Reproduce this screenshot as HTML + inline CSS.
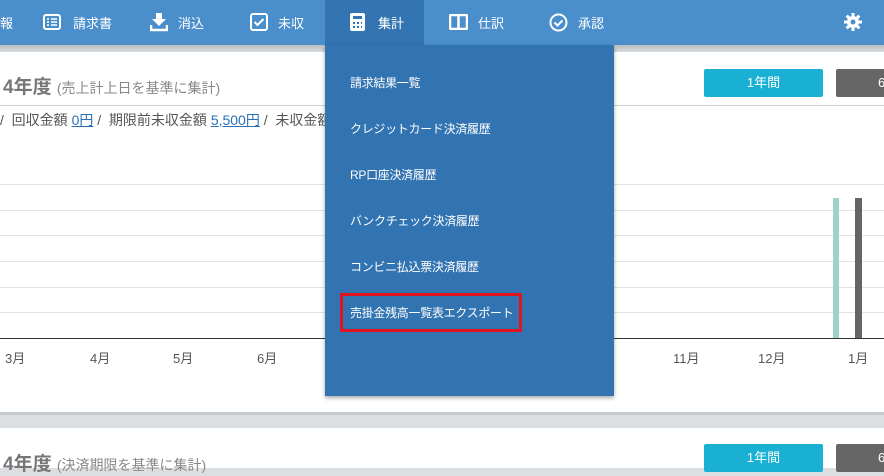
<!DOCTYPE html>
<html><head><meta charset="utf-8"><style>
*{margin:0;padding:0;box-sizing:border-box}
body{width:884px;height:465px;overflow:hidden;position:relative;background:#dcdfe1;font-family:"Liberation Sans","Noto Sans CJK JP",sans-serif}
.a{position:absolute}
.nav{left:0;top:0;width:884px;height:45px;background:#4a8fcc}
.nt{color:#fff;font-size:13px;top:13px}
.card{background:#fff;left:0;width:884px}
.gl{left:0;width:884px;height:1px;background:#e2e2e2}
.m{color:#555;font-size:13px;top:348px}
.mi{color:#fff;font-size:12px;left:350px;letter-spacing:-0.3px}
</style></head><body>
<div class="a nav"></div>
<div class="a" style="left:0;top:45px;width:884px;height:8px;background:linear-gradient(#b9bdc0,#dcdfe1)"></div>
<div class="a card" style="top:52px;height:360px"></div>
<div class="a card" style="top:428px;height:40px"></div>
<div class="a" style="left:0;top:412px;width:884px;height:3px;background:#c6cacd"></div>

<div class="a nt" style="left:0">報</div>
<svg class="a" style="left:43px;top:14px" width="18" height="16"><rect x="1" y="1" width="16" height="14" rx="2" fill="none" stroke="#fff" stroke-width="2"/><path d="M4 5h2M8 5h6M4 8h2M8 8h6M4 11h2M8 11h6" stroke="#fff" stroke-width="1.5"/></svg>
<div class="a nt" style="left:73px">請求書</div>
<svg class="a" style="left:150px;top:12px" width="18" height="20"><path d="M6 1h6v6h4l-7 7-7-7h4z" fill="#fff"/><path d="M1 13v5h16v-5" fill="none" stroke="#fff" stroke-width="2.5"/></svg>
<div class="a nt" style="left:178px">消込</div>
<svg class="a" style="left:250px;top:13px" width="18" height="18"><rect x="1" y="1" width="16" height="16" rx="2" fill="none" stroke="#fff" stroke-width="2"/><path d="M4.5 9l3 3 6-6" fill="none" stroke="#fff" stroke-width="2"/></svg>
<div class="a nt" style="left:278px">未収</div>
<div class="a" style="left:325px;top:0;width:99px;height:45px;background:#3374b2"></div>
<svg class="a" style="left:350px;top:13px" width="15" height="18"><rect x="0" y="0" width="15" height="18" rx="2" fill="#fff"/><rect x="3" y="3" width="9" height="3" fill="#3374b2"/><path d="M3 9h2v2H3zM7 9h2v2H7zM11 9h1v2h-1zM3 13h2v2H3zM7 13h2v2H7zM11 13h1v2h-1z" fill="#3374b2"/></svg>
<div class="a nt" style="left:378px">集計</div>
<svg class="a" style="left:449px;top:14px" width="19" height="16"><rect x="1" y="1" width="17" height="14" rx="1" fill="none" stroke="#fff" stroke-width="2.5"/><path d="M9.5 1v14" stroke="#fff" stroke-width="2.5"/></svg>
<div class="a nt" style="left:478px">仕訳</div>
<svg class="a" style="left:549px;top:13px" width="19" height="19"><circle cx="9.5" cy="9.5" r="8" fill="none" stroke="#fff" stroke-width="2"/><path d="M5.5 9.5l3 3 5-5" fill="none" stroke="#fff" stroke-width="2"/></svg>
<div class="a nt" style="left:578px">承認</div>
<svg class="a" style="left:844px;top:13px" width="18" height="18" viewBox="0 0 18 18"><g fill="#fff"><circle cx="9" cy="9" r="6"/><path d="M7.5 0h3v4h-3zM7.5 14h3v4h-3zM0 7.5h4v3H0zM14 7.5h4v3h-4z"/><path d="M7.5 0h3v4h-3zM7.5 14h3v4h-3zM0 7.5h4v3H0zM14 7.5h4v3h-4z" transform="rotate(45 9 9)"/></g><circle cx="9" cy="9" r="2.5" fill="#4a8fcc"/></svg>

<div class="a" style="left:3px;top:72px;font-size:19px;font-weight:bold;color:#777;white-space:nowrap">4年度 <span style="font-size:14px;font-weight:normal;color:#888">(売上計上日を基準に集計)</span></div>
<div class="a" style="left:704px;top:69px;width:119px;height:28px;background:#1ab0d4;border-radius:2px;color:#fff;font-size:13px;text-align:center;line-height:28px">1年間</div>
<div class="a" style="left:836px;top:69px;width:60px;height:28px;background:#666;border-radius:2px;color:#fff;font-size:13px;line-height:28px;padding-left:42px">6</div>
<div class="a" style="left:0;top:105px;width:884px;height:1px;background:#d0d0d0"></div>
<div class="a" style="left:0;top:110px;font-size:14px;color:#555;white-space:nowrap">/ &nbsp;回収金額 <u style="color:#2a6fb5">0円</u> / &nbsp;期限前未収金額 <u style="color:#2a6fb5">5,500円</u> / &nbsp;未収金額</div>

<div class="a gl" style="top:184px"></div><div class="a gl" style="top:210px"></div><div class="a gl" style="top:235px"></div><div class="a gl" style="top:261px"></div><div class="a gl" style="top:287px"></div><div class="a gl" style="top:312px"></div>
<div class="a" style="left:0;top:338px;width:884px;height:1px;background:#333"></div>
<div class="a" style="left:833px;top:198px;width:6px;height:140px;background:#9dd4c8"></div>
<div class="a" style="left:855px;top:198px;width:7px;height:140px;background:#666"></div>
<div class="a m" style="left:5px">3月</div><div class="a m" style="left:90px">4月</div><div class="a m" style="left:173px">5月</div><div class="a m" style="left:257px">6月</div>
<div class="a m" style="left:600px">月</div><div class="a m" style="left:673px">11月</div><div class="a m" style="left:758px">12月</div><div class="a m" style="left:848px">1月</div>

<div class="a" style="left:3px;top:449px;font-size:19px;font-weight:bold;color:#777;white-space:nowrap">4年度 <span style="font-size:14px;font-weight:normal;color:#888">(決済期限を基準に集計)</span></div>
<div class="a" style="left:704px;top:444px;width:119px;height:28px;background:#1ab0d4;border-radius:2px;color:#fff;font-size:13px;text-align:center;line-height:28px">1年間</div>
<div class="a" style="left:836px;top:444px;width:60px;height:28px;background:#666;border-radius:2px;color:#fff;font-size:13px;line-height:28px;padding-left:42px">6</div>

<div class="a" style="left:325px;top:45px;width:289px;height:351px;background:#3273b1;box-shadow:0 2px 4px rgba(0,0,0,.35)"></div>
<div class="a mi" style="top:74px">請求結果一覧</div>
<div class="a mi" style="top:120px">クレジットカード決済履歴</div>
<div class="a mi" style="top:166px">RP口座決済履歴</div>
<div class="a mi" style="top:212px">バンクチェック決済履歴</div>
<div class="a mi" style="top:258px">コンビニ払込票決済履歴</div>
<div class="a mi" style="top:304px">売掛金残高一覧表エクスポート</div>
<div class="a" style="left:340px;top:293px;width:182px;height:39px;border:3px solid #e0141e"></div>
</body></html>
